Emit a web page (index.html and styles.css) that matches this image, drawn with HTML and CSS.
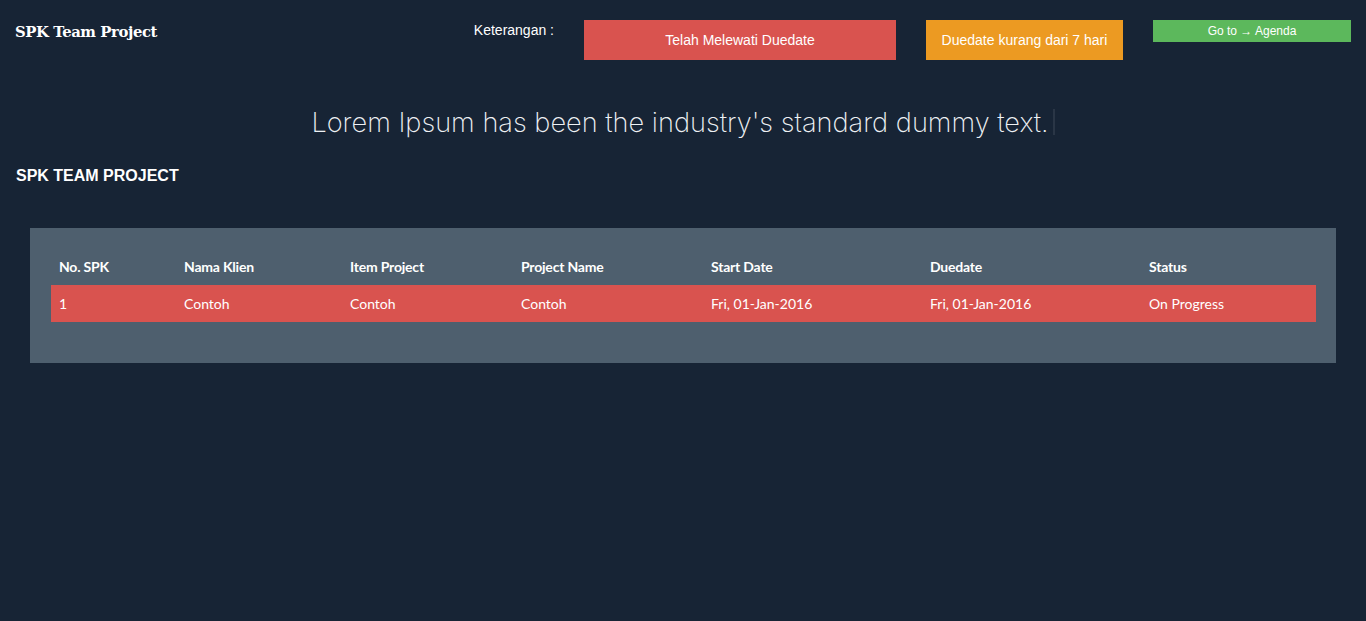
FILE: index.html
```html
<!DOCTYPE html>
<html>
<head>
<meta charset="utf-8">
<link rel="stylesheet" href="styles.css">
</head>
<body>
<header class="topbar">
  <div class="brand">SPK Team Project</div>
  <div class="legend">
    <span class="legend-label">Keterangan :</span>
    <div class="badge badge-red">Telah Melewati Duedate</div>
    <div class="badge badge-orange">Duedate kurang dari 7 hari</div>
    <a class="agenda">Go to &rarr; Agenda</a>
  </div>
</header>
<div class="tagline"><span>Lorem Ipsum has been the industry's standard dummy text.</span><span class="cursor"></span></div>
<h2 class="section-title">SPK TEAM PROJECT</h2>
<div class="panel">
  <table class="grid">
    <colgroup>
      <col class="c1"><col class="c2"><col class="c3"><col class="c4"><col class="c5"><col class="c6"><col class="c7">
    </colgroup>
    <thead>
      <tr><th>No. SPK</th><th>Nama Klien</th><th>Item Project</th><th>Project Name</th><th>Start Date</th><th>Duedate</th><th>Status</th></tr>
    </thead>
    <tbody>
      <tr class="late"><td>1</td><td>Contoh</td><td>Contoh</td><td>Contoh</td><td>Fri, 01-Jan-2016</td><td>Fri, 01-Jan-2016</td><td>On Progress</td></tr>
    </tbody>
  </table>
</div>
</body>
</html>
```

FILE: styles.css
```css
html, body {
  margin: 0;
  padding: 0;
  background: #172435;
  color: #ffffff;
  font-family: "Liberation Sans", Arial, sans-serif;
  height: 100%;
}
.topbar {
  display: flex;
  justify-content: space-between;
  align-items: flex-start;
  padding: 20px 15px 0 15px;
  height: 40px;
}
.brand {
  font-family: "DejaVu Serif", "Liberation Serif", serif;
  font-weight: bold;
  font-size: 14.8px;
  letter-spacing: -0.4px;
  margin-top: 3px;
}
.legend {
  display: flex;
  align-items: flex-start;
}
.legend-label {
  font-size: 14px;
  margin-top: 2px;
  margin-right: 30px;
}
.badge {
  height: 40px;
  display: flex;
  align-items: center;
  justify-content: center;
  font-size: 14px;
  margin-right: 30px;
}
.badge-red {
  background: #d9534f;
  width: 312px;
}
.badge-orange {
  background: #ec9a22;
  width: 197px;
}
.agenda {
  display: flex;
  align-items: center;
  justify-content: center;
  width: 198px;
  height: 22px;
  background: #5cb85c;
  font-size: 12px;
  color: #fff;
}
.tagline {
  display: flex;
  justify-content: center;
  align-items: center;
  margin-top: 44px;
  height: 36px;
  font-family: "Inter", sans-serif;
  font-weight: 200;
  font-size: 27.2px;
  color: #eef1f4;
}
.cursor {
  display: inline-block;
  width: 2px;
  height: 26px;
  background: #2a3646;
  margin-left: 4px;
}
.section-title {
  margin: 0;
  padding: 0 16px;
  margin-top: 26px;
  font-size: 16px;
  font-weight: bold;
  line-height: 20px;
}
.panel {
  margin: 42px 30px 0 30px;
  background: #4e5f6e;
  padding: 20px 20px 41px 21px;
}
.grid {
  width: 100%;
  border-collapse: collapse;
  font-family: "Lato", sans-serif;
  font-size: 14px;
  table-layout: fixed;
}
.c1 { width: 125px; }
.c2 { width: 166px; }
.c3 { width: 171px; }
.c4 { width: 190px; }
.c5 { width: 219px; }
.c6 { width: 219px; }
.c7 { width: auto; }
.grid th, .grid td {
  text-align: left;
  padding: 0 8px;
  height: 37px;
  white-space: nowrap;
}
.grid th {
  font-weight: bold;
  font-size: 14px;
  letter-spacing: -0.2px;
}
.late {
  background: #d9534f;
}
```
